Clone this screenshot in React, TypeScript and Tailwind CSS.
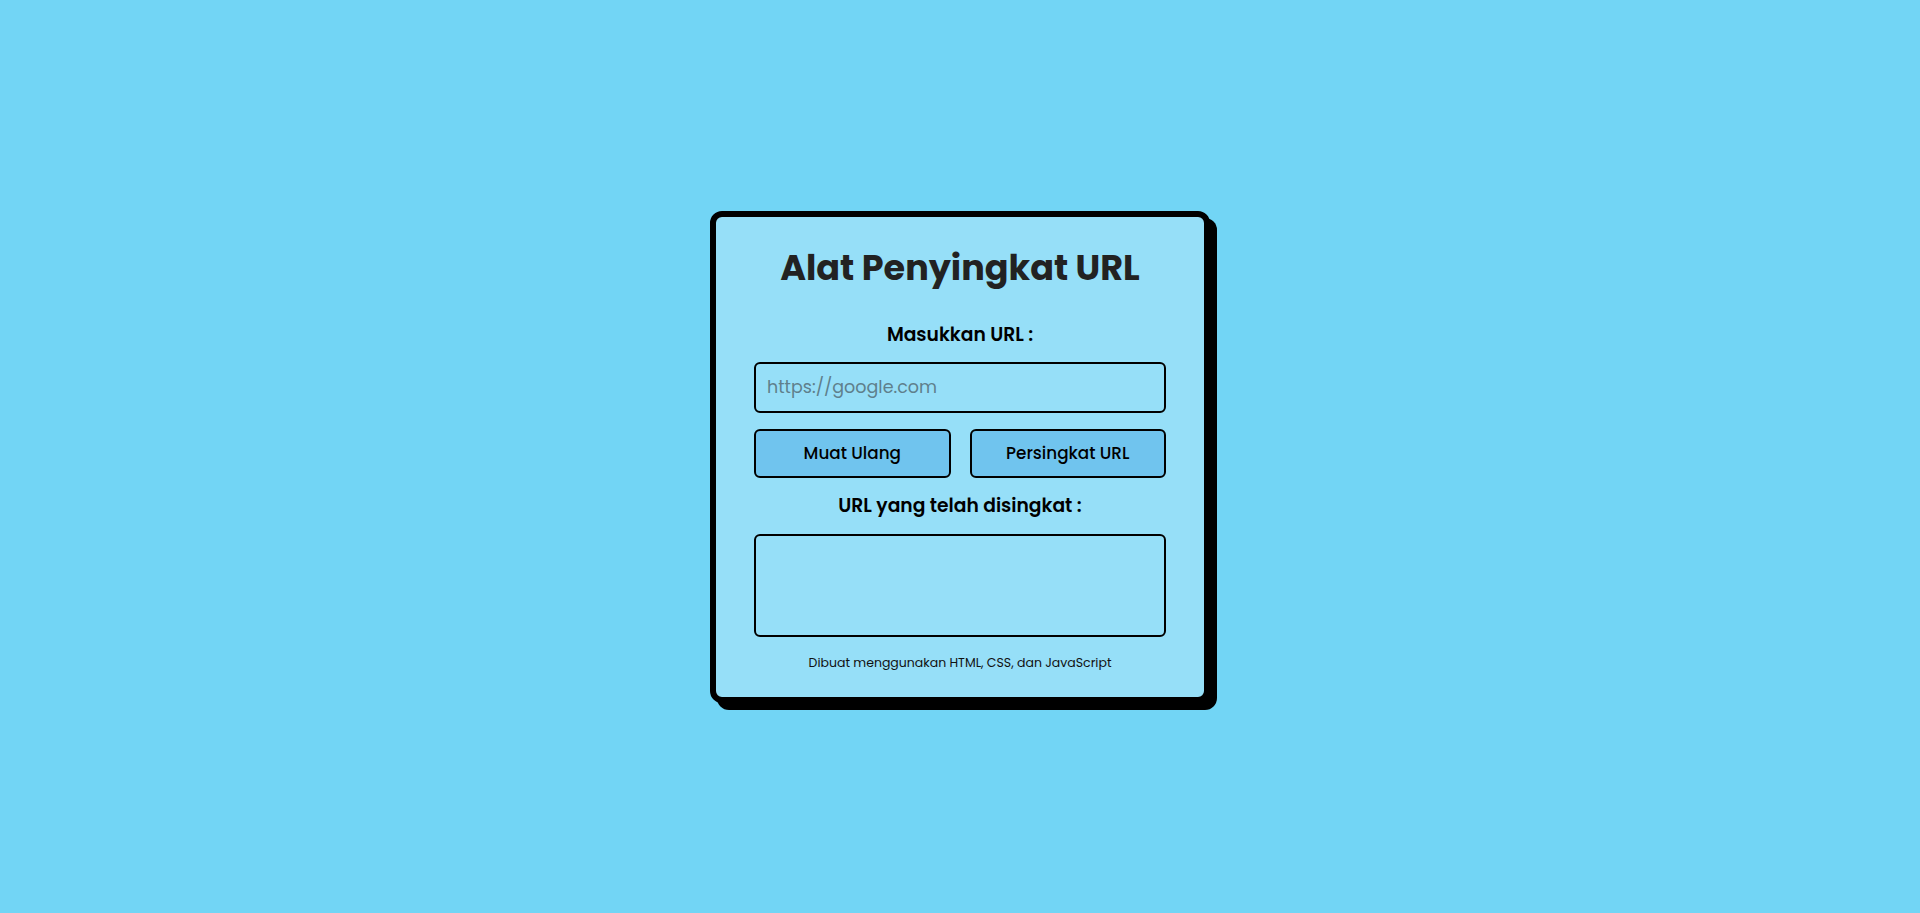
import React from "react";

export default function App() {
  return (
    <div
      className="min-h-screen w-full bg-[#72d5f5] flex items-center justify-center"
      style={{ fontFamily: "Poppins, Inter, 'Noto Sans', sans-serif" }}
    >
      <div className="w-[500px] bg-[#96dff8] border-[6px] border-black rounded-[12px] shadow-[7px_7px_0_0_#000] px-[38px] pt-[28px] pb-[24px] flex flex-col items-stretch">
        <h1 className="h-[46px] leading-[46px] text-center text-[35px] font-bold text-[#222222]">
          Alat Penyingkat URL
        </h1>
        <div className="mt-[32px] h-[24px] leading-[24px] text-center text-[18.7px] font-semibold text-black">
          Masukkan URL :
        </div>
        <input
          type="text"
          placeholder="https://google.com"
          className="mt-[15px] h-[51px] w-full bg-transparent border-2 border-black rounded-[6px] px-[11px] text-[17.5px] text-black placeholder:text-[#5f7f8c] outline-none"
        />
        <div className="mt-[16px] flex gap-[19px]">
          <button className="flex-1 h-[49px] pt-[2px] bg-[#70c4ee] border-2 border-black rounded-[6px] text-[16.8px] font-medium text-black">
            Muat Ulang
          </button>
          <button className="flex-1 h-[49px] pt-[2px] bg-[#70c4ee] border-2 border-black rounded-[6px] text-[16.8px] font-medium text-black">
            Persingkat URL
          </button>
        </div>
        <div className="mt-[16px] h-[24px] leading-[24px] text-center text-[18.7px] font-semibold text-black">
          URL yang telah disingkat :
        </div>
        <textarea className="mt-[16px] h-[103px] w-full bg-transparent border-2 border-black rounded-[6px] resize-none outline-none p-2" />
        <div className="mt-[16px] h-[20px] leading-[20px] text-center text-[12.5px] text-[#111111]">
          Dibuat menggunakan HTML, CSS, dan JavaScript
        </div>
      </div>
    </div>
  );
}
